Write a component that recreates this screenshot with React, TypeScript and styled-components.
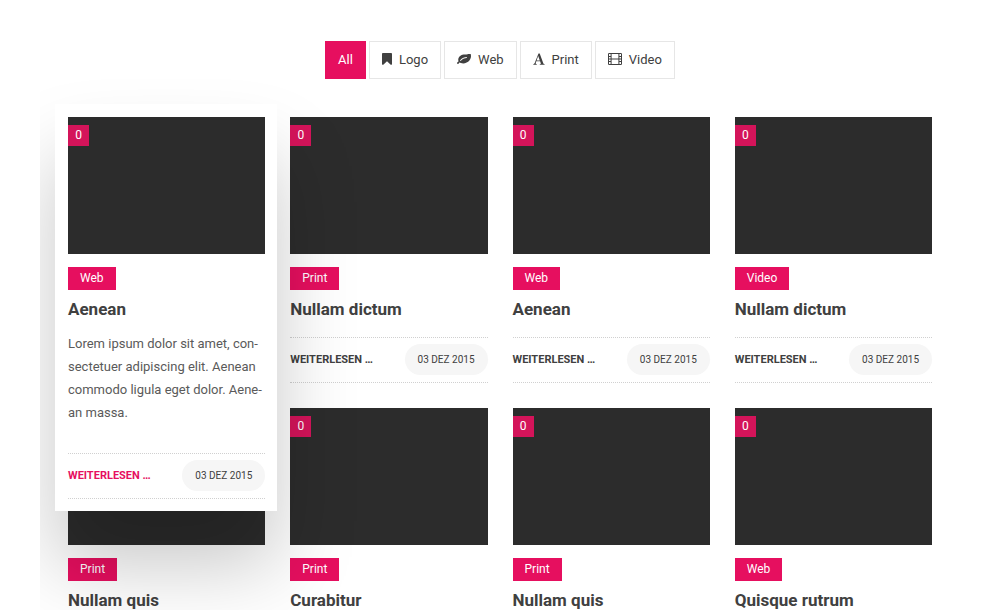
import React from "react";
import styled, { createGlobalStyle, css } from "styled-components";

const pink = "#e60f5f";
const ink = "#404040";

const GlobalStyle = createGlobalStyle`
  *, *::before, *::after { box-sizing: border-box; }
  body {
    margin: 0;
    background: #fff;
    color: ${ink};
    font-family: Roboto, "Liberation Sans", sans-serif;
    font-size: 13px;
    -webkit-font-smoothing: antialiased;
  }
`;

const Page = styled.main`
  padding: 41px 40px 0;
`;

const Filters = styled.nav`
  display: flex;
  justify-content: center;
  gap: 3px;
`;

const FilterButton = styled.button<{ $active?: boolean }>`
  display: flex;
  align-items: center;
  gap: 7px;
  height: 38px;
  padding: 0 12px 2px;
  border: 1px solid ${(p) => (p.$active ? pink : "#e6e6e6")};
  background: ${(p) => (p.$active ? pink : "#fff")};
  color: ${(p) => (p.$active ? "#fff" : ink)};
  font: inherit;
  cursor: pointer;

  svg {
    flex: none;
    fill: currentColor;
  }
`;

const Stage = styled.section`
  padding: 25px 16px 40px 15px;
  overflow: hidden;
`;

const Grid = styled.ul`
  display: grid;
  grid-template-columns: repeat(4, 1fr);
  margin: 0;
  padding: 0;
  list-style: none;
`;

const Cell = styled.li`
  position: relative;
`;

const raised = css`
  position: absolute;
  z-index: 1;
  top: 0;
  left: 0;
  right: 0;
  background: #fff;
  box-shadow: 0 54px 80px rgba(0, 0, 0, 0.22);
`;

const Card = styled.article<{ $raised?: boolean }>`
  padding: 13px 12px 12px 13px;
  ${(p) => p.$raised && raised}
`;

const Thumb = styled.div`
  position: relative;
  aspect-ratio: 197 / 137;
  background: #2c2c2c;
`;

const Count = styled.span`
  position: absolute;
  top: 8px;
  left: 0;
  width: 21px;
  background: #d4145a;
  color: #fff;
  font-size: 12px;
  line-height: 21px;
  text-align: center;
`;

const Tag = styled.a`
  display: inline-block;
  margin-top: 13px;
  padding: 0 12px;
  background: ${pink};
  color: #fff;
  font-size: 12px;
  line-height: 23px;
  text-decoration: none;
  vertical-align: top;
`;

const Title = styled.h2`
  margin: 8px 0 16px;
  font-size: 17px;
  font-weight: 700;
  line-height: 23px;
`;

const Excerpt = styled.p`
  margin: -5px 0 29px;
  color: #5a5a5a;
  font-size: 13px;
  line-height: 23px;
`;

const CardFooter = styled.footer`
  display: flex;
  align-items: center;
  justify-content: space-between;
  height: 46px;
  padding-bottom: 2px;
  border-top: 1px dotted #d0d0d0;
  border-bottom: 1px dotted #d0d0d0;
`;

const ReadMore = styled.a<{ $active?: boolean }>`
  color: ${(p) => (p.$active ? pink : ink)};
  font-size: 11px;
  font-weight: 700;
  text-decoration: none;
  text-transform: uppercase;
`;

const DateLabel = styled.time`
  padding: 0 13px;
  border-radius: 16px;
  background: #f6f6f6;
  font-size: 10px;
  line-height: 31px;
  text-transform: uppercase;
`;

const BookmarkIcon = () => (
  <svg width="10" height="12" viewBox="256 128 1280 1536" aria-hidden="true">
    <path d="M1420 128q23 0 44 9 33 13 52.5 41t19.5 62v1289q0 34-19.5 62t-52.5 41q-19 8-44 8-48 0-83-32l-441-424-441 424q-36 33-83 33-23 0-44-9-33-13-52.5-41t-19.5-62v-1289q0-34 19.5-62t52.5-41q21-9 44-9h1048z" />
  </svg>
);

const LeafIcon = () => (
  <svg width="14" height="10" viewBox="0 256 1792 1280" aria-hidden="true">
    <path d="M1280 704q0-26-19-45t-45-19q-172 0-318 49.5t-259.5 134-235.5 219.5q-19 21-19 45 0 26 19 45t45 19q24 0 45-19 27-24 74-71t67-66q137-124 268.5-176t313.5-52q26 0 45-19t19-45zm512-198q0 95-20 193-46 224-184.5 383t-357.5 268q-214 108-438 108-148 0-286-47-15-5-88-42t-96-37q-16 0-39.5 32t-45 70-52.5 70-60 32q-43 0-63.5-17.5t-45.5-59.5q-2-4-6-11t-5.5-10-3-9.5-1.5-13.5q0-35 31-73.5t68-65.5 68-56 31-48q0-4-14-38t-16-44q-9-51-9-104 0-115 43.5-220t119-184.5 170.5-139 204-95.5q55-18 145-25.5t179.5-9 178.5-6 163.5-24 113.5-56.5l29.5-29.5 29.5-28 27-20 36.5-16 43.5-4.5q39 0 70.5 46t47.5 112 24 124 8 96z" />
  </svg>
);

const LetterIcon = () => (
  <svg width="12" height="12" viewBox="0 0 12 12" aria-hidden="true">
    <path d="M5.5 0.5H6.7L10.3 10.2Q10.6 11.1 11.7 11.2V11.8H6.7V11.2Q8.1 11.2 7.8 10.3L7.1 8.3H3.3L2.7 10Q2.4 11.1 3.8 11.2V11.8H0.3V11.2Q1.3 11.1 1.7 10.1ZM5.2 3.1L3.6 7.5H6.8Z" />
  </svg>
);

const FilmIcon = () => (
  <svg width="14" height="12" viewBox="0 0 14 12" aria-hidden="true">
    <path
      fillRule="evenodd"
      d="M1.2 0H12.8Q14 0 14 1.2V10.8Q14 12 12.8 12H1.2Q0 12 0 10.8V1.2Q0 0 1.2 0ZM1 1V3H2.6V1ZM1 4V5.5H2.6V4ZM1 6.5V8H2.6V6.5ZM1 9V11H2.6V9ZM3.6 1V5.5H10.4V1ZM3.6 6.5V11H10.4V6.5ZM11.4 1V3H13V1ZM11.4 4V5.5H13V4ZM11.4 6.5V8H13V6.5ZM11.4 9V11H13V9Z"
    />
  </svg>
);

const filters = [
  { label: "All", icon: null },
  { label: "Logo", icon: <BookmarkIcon /> },
  { label: "Web", icon: <LeafIcon /> },
  { label: "Print", icon: <LetterIcon /> },
  { label: "Video", icon: <FilmIcon /> },
];

interface Post {
  tag: string;
  title: string;
  excerpt?: string;
}

const posts: Post[] = [
  {
    tag: "Web",
    title: "Aenean",
    excerpt:
      "Lorem ipsum dolor sit amet, con\u00adsectetuer adipiscing elit. Aenean commodo ligula eget dolor. Aene\u00adan massa.",
  },
  { tag: "Print", title: "Nullam dictum" },
  { tag: "Web", title: "Aenean" },
  { tag: "Video", title: "Nullam dictum" },
  { tag: "Print", title: "Nullam quis" },
  { tag: "Print", title: "Curabitur" },
  { tag: "Print", title: "Nullam quis" },
  { tag: "Web", title: "Quisque rutrum" },
];

const PostCard = ({ tag, title, excerpt }: Post) => (
  <Card $raised={Boolean(excerpt)}>
    <Thumb>
      <Count>0</Count>
    </Thumb>
    <Tag href="#">{tag}</Tag>
    <Title>{title}</Title>
    {excerpt && <Excerpt>{excerpt}</Excerpt>}
    <CardFooter>
      <ReadMore href="#" $active={Boolean(excerpt)}>
        Weiterlesen …
      </ReadMore>
      <DateLabel dateTime="2015-12-03">03 Dez 2015</DateLabel>
    </CardFooter>
  </Card>
);

export default function App() {
  return (
    <Page>
      <GlobalStyle />
      <Filters aria-label="Filter">
        {filters.map(({ label, icon }, i) => (
          <FilterButton key={label} type="button" $active={i === 0}>
            {icon}
            {label}
          </FilterButton>
        ))}
      </Filters>
      <Stage>
        <Grid>
          {posts.map((post, i) => (
            <Cell key={i}>
              <PostCard {...post} />
            </Cell>
          ))}
        </Grid>
      </Stage>
    </Page>
  );
}
